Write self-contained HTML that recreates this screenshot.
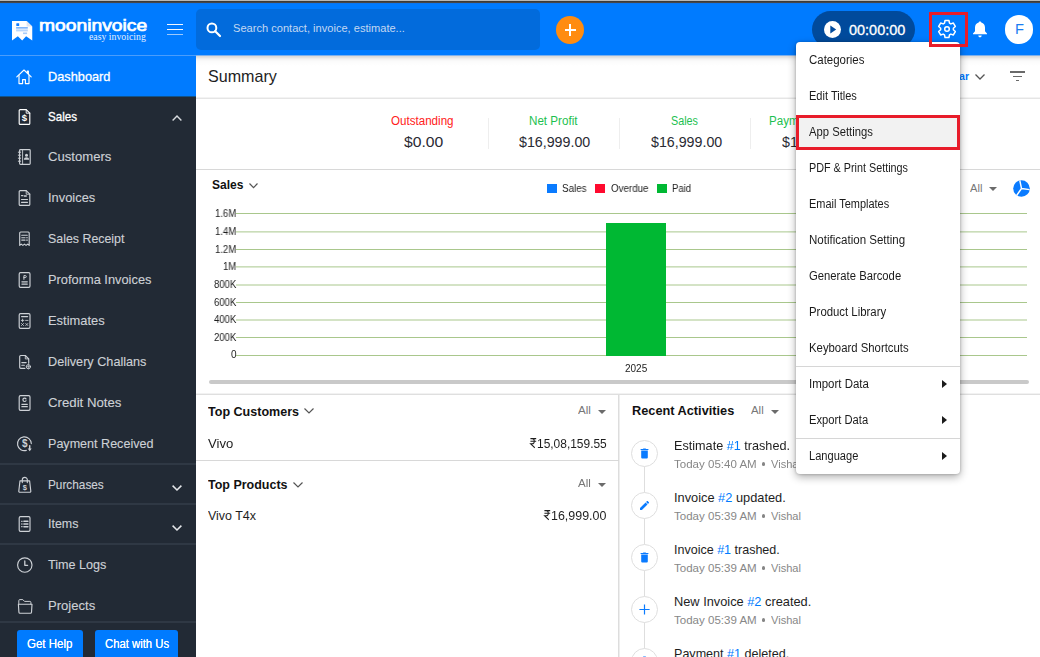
<!DOCTYPE html>
<html>
<head>
<meta charset="utf-8">
<title>Moon Invoice - Dashboard</title>
<style>
*{box-sizing:border-box;margin:0;padding:0}
html,body{width:1040px;height:657px;overflow:hidden;background:#fff}
body{position:relative;font-family:"Liberation Sans",sans-serif;color:#222;font-size:13px}
.a{position:absolute}
.t{position:absolute;white-space:pre;transform-origin:0 50%}
.t b{font-weight:inherit;color:#007bff}
svg{position:absolute;overflow:visible}
.sdiv{position:absolute;left:0;width:196px;height:2px;background:#2f3844}
.hl{position:absolute;height:1px;background:#d8d8d8}
.grid{position:absolute;left:236px;width:791px;height:1px;background:#b7d09e}
.caret{position:absolute;width:0;height:0;border-left:4px solid transparent;border-right:4px solid transparent;border-top:4.5px solid #6b6b6b}
.circ{position:absolute;left:631px;width:27px;height:27px;border:1px solid #dedede;border-radius:50%;background:#fff}
.marr{position:absolute;left:942px;width:0;height:0;border-top:4px solid transparent;border-bottom:4px solid transparent;border-left:5px solid #1b1b1b}
.red{position:absolute;border:3px solid #e81c2a}
</style>
</head>
<body>
<div class="a" style="left:0;top:0;width:1040px;height:56px;background:#007bff"></div>
<div class="a" style="left:0;top:0;width:1040px;height:1px;background:#b9b9b7"></div>
<div class="a" style="left:0;top:1px;width:1040px;height:1px;background:#3a3a3a"></div>
<div class="a" style="left:0;top:2px;width:1040px;height:1px;background:#464749"></div>
<div class="a" style="left:0;top:3px;width:1040px;height:1px;background:#0a76f0"></div>
<div class="a" style="left:0;top:56px;width:196px;height:601px;background:#222a35"></div>
<div class="a" style="left:0;top:55px;width:196px;height:41px;background:#007bff;border-top:1px solid #4a9dfc;border-bottom:0;box-shadow:0 1px 0 #11538a"></div>
<div class="a" style="left:196px;top:55px;width:844px;height:1px;background:#7db0ec"></div>
<div class="a" style="left:196px;top:56px;width:844px;height:10px;background:linear-gradient(#dcdad8 0,#dddcdb 0.5px,#e3e3e3 1.5px,#ededed 2.5px,#f4f4f4 3.5px,#f8f8f8 4.5px,#fbfbfb 5.5px,#fdfdfd 7.5px,#fff 10px)"></div>
<svg style="left:11.85px;top:20.6px" width="20.25" height="19.5" viewBox="0 0 20.25 19.5"><path d="M0 0H14.600L20.250 5.400V19.500L14.100 15.300L10.200 19.500L5.850 15.300L0 19.500Z" fill="#fff"/><path d="M14.600 0V5.400H20.250Z" fill="#e4e6ee"/><rect x="4.300" y="2.200" width="2.900" height="2.700" rx="0.500" fill="#0f7bff"/><rect x="4.100" y="6.400" width="11.700" height="1" fill="#2d86f7"/><rect x="4.100" y="8.400" width="11.700" height="2" fill="#b9d6fb"/><rect x="11" y="11.500" width="4.100" height="1.600" fill="#a8ccfa"/></svg>
<div class="t" style="left:39.20px;top:18.46px;font-size:16px;line-height:16px;color:#fff;transform:scaleX(1.2034);-webkit-text-stroke:0.7px #fff;">mooninvoice</div>
<div class="t" style="left:89.23px;top:32.11px;font-size:10.5px;line-height:10.5px;color:#e4efff;font-family:'Liberation Serif';transform:scaleX(0.9325);">easy invoicing</div>
<div class="a" style="left:167.1px;top:24px;width:16.4px;height:1.25px;background:#f2f7ff"></div>
<div class="a" style="left:167.1px;top:28.5px;width:16.4px;height:1.25px;background:#f2f7ff"></div>
<div class="a" style="left:167.1px;top:33.5px;width:16.4px;height:1.25px;background:#9cc8fb"></div>
<div class="a" style="left:196px;top:9px;width:344px;height:41px;background:#026bdc;border-radius:5px"></div>
<svg style="left:206px;top:22px" width="16" height="16" viewBox="0 0 16 16"><circle cx="5.9" cy="5.9" r="4.4" fill="none" stroke="#fff" stroke-width="2"/><path d="M9.2 9.2L14 14" stroke="#fff" stroke-width="2.2" stroke-linecap="round"/></svg>
<div class="t" style="left:232.50px;top:23.19px;font-size:11px;line-height:11px;color:#c3d8f2;transform:scaleX(1.0075);">Search contact, invoice, estimate...</div>
<div class="a" style="left:556px;top:16px;width:28px;height:28px;border-radius:50%;background:#ff8c10"></div>
<div class="a" style="left:564.5px;top:29px;width:11.5px;height:2px;background:#fff"></div>
<div class="a" style="left:569.2px;top:24.2px;width:2px;height:11.5px;background:#fff"></div>
<div class="a" style="left:812px;top:11px;width:103px;height:37px;border-radius:19px;background:#004a9c"></div>
<svg style="left:823.6px;top:21px" width="17" height="17" viewBox="0 0 17 17"><circle cx="8.5" cy="8.5" r="8.5" fill="#fff"/><path d="M6.3 4.6L12.2 8.5L6.3 12.4Z" fill="#004a9c"/></svg>
<div class="t" style="left:849.17px;top:22.65px;font-size:14px;line-height:14px;color:#fff;transform:scaleX(1.0334);-webkit-text-stroke:0.3px #fff;">00:00:00</div>
<svg style="left:937.4px;top:18.9px" width="20" height="20" viewBox="0 0 20 20" fill="none" stroke="#fff" stroke-width="1.5" stroke-linejoin="round"><circle cx="10" cy="10" r="2.3"/><path d="M12.50 4.11L11.96 1.52L8.04 1.52L7.50 4.11L6.15 4.89L3.64 4.07L1.68 7.46L3.65 9.22L3.65 10.78L1.68 12.54L3.64 15.93L6.15 15.11L7.50 15.89L8.04 18.48L11.96 18.48L12.50 15.89L13.85 15.11L16.36 15.93L18.32 12.54L16.35 10.78L16.35 9.22L18.32 7.46L16.36 4.07L13.85 4.89Z"/></svg>
<svg style="left:972px;top:20.5px" width="16" height="17" viewBox="0 0 16 17"><path d="M8 0.4c.8 0 1.3.5 1.3 1.2 2.3.6 3.7 2.6 3.7 5v3.6l2 2.2v.9H1v-.9l2-2.2V6.6c0-2.4 1.400-4.400 3.700-5 0-.7.500-1.200 1.300-1.200z" fill="#fff"/><path d="M6.300 14.500h3.400c0 1-.75 1.800-1.700 1.800s-1.700-.8-1.700-1.800z" fill="#fff"/></svg>
<div class="a" style="left:1004.7px;top:15.3px;width:28.4px;height:28.4px;border-radius:50%;background:#fff"></div>
<div class="t" style="left:1014.53px;top:21.20px;font-size:15px;line-height:15px;color:#1a7df2;transform:scaleX(0.9813);">F</div>
<div class="t" style="left:48.02px;top:70.20px;font-size:13px;line-height:13px;color:#fff;transform:scaleX(0.9816);-webkit-text-stroke:0.3px #fff;">Dashboard</div>
<div class="t" style="left:48.02px;top:110.00px;font-size:13px;line-height:13px;color:#fff;transform:scaleX(0.8896);-webkit-text-stroke:0.3px #fff;">Sales</div>
<div class="t" style="left:48.02px;top:150.20px;font-size:13px;line-height:13px;color:#cdd1d6;transform:scaleX(1.0092);-webkit-text-stroke:0.12px #cdd1d6;">Customers</div>
<div class="t" style="left:48.02px;top:191.20px;font-size:13px;line-height:13px;color:#cdd1d6;transform:scaleX(0.9903);-webkit-text-stroke:0.12px #cdd1d6;">Invoices</div>
<div class="t" style="left:48.02px;top:232.00px;font-size:13px;line-height:13px;color:#cdd1d6;transform:scaleX(0.9529);-webkit-text-stroke:0.12px #cdd1d6;">Sales Receipt</div>
<div class="t" style="left:48.02px;top:273.00px;font-size:13px;line-height:13px;color:#cdd1d6;transform:scaleX(0.9873);-webkit-text-stroke:0.12px #cdd1d6;">Proforma Invoices</div>
<div class="t" style="left:48.02px;top:313.80px;font-size:13px;line-height:13px;color:#cdd1d6;transform:scaleX(0.9923);-webkit-text-stroke:0.12px #cdd1d6;">Estimates</div>
<div class="t" style="left:48.02px;top:355.00px;font-size:13px;line-height:13px;color:#cdd1d6;transform:scaleX(0.9731);-webkit-text-stroke:0.12px #cdd1d6;">Delivery Challans</div>
<div class="t" style="left:48.02px;top:396.00px;font-size:13px;line-height:13px;color:#cdd1d6;transform:scaleX(1.0165);-webkit-text-stroke:0.12px #cdd1d6;">Credit Notes</div>
<div class="t" style="left:48.02px;top:436.80px;font-size:13px;line-height:13px;color:#cdd1d6;transform:scaleX(0.9662);-webkit-text-stroke:0.12px #cdd1d6;">Payment Received</div>
<div class="t" style="left:48.02px;top:477.50px;font-size:13px;line-height:13px;color:#cdd1d6;transform:scaleX(0.9075);-webkit-text-stroke:0.12px #cdd1d6;">Purchases</div>
<div class="t" style="left:48.02px;top:517.40px;font-size:13px;line-height:13px;color:#cdd1d6;transform:scaleX(0.9573);-webkit-text-stroke:0.12px #cdd1d6;">Items</div>
<div class="t" style="left:48.02px;top:558.20px;font-size:13px;line-height:13px;color:#cdd1d6;transform:scaleX(0.9705);-webkit-text-stroke:0.12px #cdd1d6;">Time Logs</div>
<div class="t" style="left:48.02px;top:599.30px;font-size:13px;line-height:13px;color:#cdd1d6;transform:scaleX(1.0058);-webkit-text-stroke:0.12px #cdd1d6;">Projects</div>
<div class="sdiv" style="top:463px"></div>
<div class="sdiv" style="top:503px"></div>
<div class="sdiv" style="top:543px"></div>
<div class="sdiv" style="top:620.5px"></div>
<svg style="left:16.4px;top:67.6px" width="16" height="18" viewBox="0 0 16 18" fill="none" stroke="#fff" stroke-width="1.15" stroke-linecap="round" stroke-linejoin="round"><path d="M0.800 8.800L8 2L15.200 8.800"/><path d="M3 7.200V15.600H6.600V11.600H9.400V15.600H13V7.200"/><path d="M11.300 4.800V3H12.400V6"/></svg>
<svg style="left:16.7px;top:108.0px" width="16" height="18" viewBox="0 0 16 18" fill="none" stroke="#fff" stroke-width="1.15" stroke-linecap="round" stroke-linejoin="round"><path d="M3.2 1.6h6l3.6 3.6v10.200a1 1 0 0 1-1 1H3.200a1 1 0 0 1-1-1V2.600a1 1 0 0 1 1-1z"/><path d="M9.200 1.600v3.600h3.600" stroke-width="0.900"/><text x="7.5" y="12.8" font-family="Liberation Sans" font-weight="700" font-size="9.5" text-anchor="middle" fill="#fff" stroke="none">$</text></svg>
<svg style="left:16.7px;top:148.2px" width="16" height="18" viewBox="0 0 16 18" fill="none" stroke="#cdd1d6" stroke-width="1.15" stroke-linecap="round" stroke-linejoin="round"><rect x="2.600" y="1.600" width="10.600" height="14.800" rx="0.900"/><path d="M5.600 1.600v14.800" stroke-width="0.900"/><path d="M1.300 4.200h2.400M1.300 7.200h2.400M1.300 10.200h2.400M1.300 13.200h2.400" stroke-width="1"/><circle cx="9.500" cy="7.300" r="1.500" fill="#cdd1d6" stroke="none"/><path d="M6.900 11.800c0-1.800 1.200-2.500 2.600-2.500s2.600.7 2.600 2.500z" fill="#cdd1d6" stroke="none"/></svg>
<svg style="left:16.7px;top:189.2px" width="16" height="18" viewBox="0 0 16 18" fill="none" stroke="#cdd1d6" stroke-width="1.15" stroke-linecap="round" stroke-linejoin="round"><path d="M3.2 1.6h6l3.6 3.6v10.200a1 1 0 0 1-1 1H3.200a1 1 0 0 1-1-1V2.600a1 1 0 0 1 1-1z"/><path d="M9.200 1.600v3.600h3.600" stroke-width="0.900"/><path d="M4.500 6.600h1.300M7.300 7h2" stroke-width="1.300"/><path d="M4.500 10.500h6M4.500 13.300h6" stroke-width="1.200"/></svg>
<svg style="left:16.7px;top:230.0px" width="16" height="18" viewBox="0 0 16 18" fill="none" stroke="#cdd1d6" stroke-width="1.15" stroke-linecap="round" stroke-linejoin="round"><path d="M2.700 3a1 1 0 0 1 1-1h7.500a1 1 0 0 1 1 1v12.400l-1.580-1.300-1.580 1.300-1.580-1.300-1.580 1.300-1.580-1.300-1.580 1.300z"/><path d="M4.700 5.300h5.600M4.700 7.700h3.400M4.700 10.100h3.400M9.600 7.700h.8M9.600 10.100h.8" stroke-width="1.100"/></svg>
<svg style="left:16.7px;top:271.0px" width="16" height="18" viewBox="0 0 16 18" fill="none" stroke="#cdd1d6" stroke-width="1.15" stroke-linecap="round" stroke-linejoin="round"><rect x="2.200" y="1.600" width="10.800" height="14.800" rx="1.300"/><path d="M4.900 10.800h5.400M4.900 13.100h5.400" stroke-width="1.200"/><path d="M6.900 8.400V4.600h1.400a1 1 0 0 1 0 2H6.900" stroke-width="1"/></svg>
<svg style="left:16.7px;top:311.8px" width="16" height="18" viewBox="0 0 16 18" fill="none" stroke="#cdd1d6" stroke-width="1.15" stroke-linecap="round" stroke-linejoin="round"><rect x="2.200" y="1.600" width="10.800" height="14.800" rx="1.300"/><path d="M4.600 4.600h6" stroke-width="1.300"/><path d="M4.300 8.400h2.600M5.600 7.100v2.600M8.600 8.400h2.400M4.500 11.500l2 2M6.500 11.500l-2 2M8.800 11.500l2 2M10.800 11.500l-2 2" stroke-width="0.850"/></svg>
<svg style="left:16.7px;top:353.0px" width="16" height="18" viewBox="0 0 16 18" fill="none" stroke="#cdd1d6" stroke-width="1.15" stroke-linecap="round" stroke-linejoin="round"><path d="M8 15.300H3.700a1 1 0 0 1-1-1V3.500a1 1 0 0 1 1-1h4.600l3.400 3.400v4.400"/><path d="M8.300 2.500v3.400h3.400" stroke-width="0.900"/><path d="M4.800 9.600h4.400M4.800 12.300h2.600" stroke-width="1.100"/><circle cx="11.400" cy="13.700" r="2.100" stroke-width="0.900"/><path d="M11.400 11.600v4.200M9.300 13.700h4.200" stroke-width="0.700"/></svg>
<svg style="left:16.7px;top:394.0px" width="16" height="18" viewBox="0 0 16 18" fill="none" stroke="#cdd1d6" stroke-width="1.15" stroke-linecap="round" stroke-linejoin="round"><rect x="2.200" y="1.600" width="10.800" height="14.800" rx="1.300"/><path d="M4.900 10.300h5.400M4.900 12.700h5.400" stroke-width="1.300"/><path d="M9 4.900c-.3-.5-.8-.8-1.400-.8a1.700 1.700 0 0 0 0 3.400c.6 0 1.100-.3 1.400-.8" stroke-width="1.200"/></svg>
<svg style="left:16.7px;top:434.8px" width="16" height="18" viewBox="0 0 16 18" fill="none" stroke="#cdd1d6" stroke-width="1.15" stroke-linecap="round" stroke-linejoin="round"><path d="M9.300 15.400A6.900 6.900 0 1 1 14.300 8.600"/><text x="7.7" y="12.3" font-family="Liberation Sans" font-weight="700" font-size="10" text-anchor="middle" fill="#cdd1d6" stroke="none">$</text><path d="M12.700 10.800v3.600" stroke-width="1.500"/><path d="M10.700 13.600h4l-2 2.600z" fill="#cdd1d6" stroke="none"/></svg>
<svg style="left:16.7px;top:475.5px" width="16" height="18" viewBox="0 0 16 18" fill="none" stroke="#cdd1d6" stroke-width="1.15" stroke-linecap="round" stroke-linejoin="round"><path d="M3 4.800h9.600l1.200 10.200a1 1 0 0 1-1 1.200H2.800a1 1 0 0 1-1-1.200z"/><path d="M5.300 6.600V3.800a2.500 2.500 0 0 1 5 0v2.800"/><text x="7.8" y="13.7" font-family="Liberation Sans" font-weight="700" font-size="7.5" text-anchor="middle" fill="#cdd1d6" stroke="none">$</text></svg>
<svg style="left:16.7px;top:515.4px" width="16" height="18" viewBox="0 0 16 18" fill="none" stroke="#cdd1d6" stroke-width="1.15" stroke-linecap="round" stroke-linejoin="round"><rect x="2.200" y="1.600" width="10.800" height="14.800" rx="1.300"/><path d="M4.400 6.300h.9M4.400 9h.9M4.400 11.700h.9" stroke-width="1"/><path d="M6.900 6.300h4M6.900 9h4M6.900 11.700h4" stroke-width="1.500"/></svg>
<svg style="left:16.7px;top:556.2px" width="16" height="18" viewBox="0 0 16 18" fill="none" stroke="#cdd1d6" stroke-width="1.15" stroke-linecap="round" stroke-linejoin="round"><circle cx="7.800" cy="9" r="7.200"/><path d="M7.800 5v4.300h2.800" stroke-width="1.300"/></svg>
<svg style="left:16.7px;top:597.3px" width="16" height="18" viewBox="0 0 16 18" fill="none" stroke="#cdd1d6" stroke-width="1.15" stroke-linecap="round" stroke-linejoin="round"><path d="M1.800 7.200V3.600a1 1 0 0 1 1-1h3l1.700 1.800h5.400a1 1 0 0 1 1 1v1.800" stroke-width="1"/><path d="M1.400 7.200h13.600l-.5 8a1.100 1.100 0 0 1-1.100 1H3a1.100 1.100 0 0 1-1.100-1z"/></svg>
<svg style="left:171.5px;top:114.500px" width="10" height="6" viewBox="0 0 10 6" fill="none" stroke="#d8dbdf" stroke-width="1.400"><path d="M0.600 5.400L5 1L9.400 5.400"/></svg>
<svg style="left:171.500px;top:485px" width="10" height="6" viewBox="0 0 10 6" fill="none" stroke="#e4e6e9" stroke-width="1.500"><path d="M0.600 0.600L5 5L9.400 0.600"/></svg>
<svg style="left:171.500px;top:525px" width="10" height="6" viewBox="0 0 10 6" fill="none" stroke="#e4e6e9" stroke-width="1.500"><path d="M0.600 0.600L5 5L9.400 0.600"/></svg>
<div class="a" style="left:17px;top:630px;width:66px;height:30px;background:#007bff;border-radius:3px"></div>
<div class="a" style="left:95px;top:630px;width:82.800px;height:30px;background:#007bff;border-radius:3px"></div>
<div class="t" style="left:26.96px;top:638.14px;font-size:12px;line-height:12px;color:#fff;transform:scaleX(0.9599);text-shadow:0 0 0.500px #fff;">Get Help</div>
<div class="t" style="left:104.86px;top:638.14px;font-size:12px;line-height:12px;color:#fff;transform:scaleX(0.9416);text-shadow:0 0 0.500px #fff;">Chat with Us</div>
<div class="t" style="left:207.74px;top:67.61px;font-size:17px;line-height:17px;color:#1e1e1e;transform:scaleX(0.9467);">Summary</div>
<div class="t" style="left:959.00px;top:70.69px;font-size:11px;line-height:11px;color:#007bff;font-weight:700;transform:scaleX(0.9686);">ar</div>
<svg style="left:974.500px;top:73.500px" width="10" height="6" viewBox="0 0 10 6" fill="none" stroke="#555" stroke-width="1.300"><path d="M0.500 0.500L5 5L9.500 0.500"/></svg>
<div class="a" style="left:1009.500px;top:71.2px;width:15px;height:1.400px;background:#6a6a6a"></div>
<div class="a" style="left:1012.500px;top:75.700px;width:9px;height:1.400px;background:#6a6a6a"></div>
<div class="a" style="left:1015.500px;top:80px;width:3.300px;height:1.400px;background:#6a6a6a"></div>
<div class="hl" style="left:196px;top:98px;width:844px;background:#e5e5e5;box-shadow:0 -1px 0 #f3f3f3"></div>
<div class="hl" style="left:196px;top:169px;width:844px"></div>
<div class="a" style="left:488px;top:117.5px;width:1px;height:31px;background:#eeeeee"></div>
<div class="a" style="left:619px;top:117.5px;width:1px;height:31px;background:#eeeeee"></div>
<div class="a" style="left:750px;top:117.5px;width:1px;height:31px;background:#eeeeee"></div>
<div class="t" style="left:390.66px;top:114.84px;font-size:12px;line-height:12px;color:#ff2020;transform:scaleX(0.9666);">Outstanding</div>
<div class="t" style="left:404.30px;top:133.68px;font-size:15.5px;line-height:15.5px;color:#2a2a33;transform:scaleX(1.0114);">$0.00</div>
<div class="t" style="left:528.96px;top:114.84px;font-size:12px;line-height:12px;color:#1cbf50;transform:scaleX(0.9689);">Net Profit</div>
<div class="t" style="left:519.30px;top:133.68px;font-size:15.5px;line-height:15.5px;color:#2a2a33;transform:scaleX(0.9183);">$16,999.00</div>
<div class="t" style="left:670.96px;top:114.84px;font-size:12px;line-height:12px;color:#1cbf50;transform:scaleX(0.8977);">Sales</div>
<div class="t" style="left:650.80px;top:133.68px;font-size:15.5px;line-height:15.5px;color:#2a2a33;transform:scaleX(0.9183);">$16,999.00</div>
<div class="t" style="left:769.46px;top:114.84px;font-size:12px;line-height:12px;color:#1cbf50;transform:scaleX(0.9627);">Payment Received</div>
<div class="t" style="left:782.30px;top:133.68px;font-size:15.5px;line-height:15.5px;color:#2a2a33;transform:scaleX(0.9183);">$16,999.00</div>
<div class="t" style="left:211.91px;top:177.80px;font-size:13px;line-height:13px;color:#111;font-weight:700;transform:scaleX(0.9281);">Sales</div>
<svg style="left:248.800px;top:182.500px" width="9" height="6" viewBox="0 0 9 6" fill="none" stroke="#555" stroke-width="1.200"><path d="M0.500 0.500L4.500 4.700L8.500 0.500"/></svg>
<div class="a" style="left:547px;top:184px;width:10px;height:9px;background:#0a7bff"></div>
<div class="t" style="left:562.00px;top:183.53px;font-size:10px;line-height:10px;color:#222;transform:scaleX(0.9794);will-change:transform;">Sales</div>
<div class="a" style="left:595px;top:184px;width:10px;height:9px;background:#ff0a2f"></div>
<div class="t" style="left:610.50px;top:183.53px;font-size:10px;line-height:10px;color:#222;transform:scaleX(0.9776);will-change:transform;">Overdue</div>
<div class="a" style="left:656.500px;top:184px;width:10px;height:9px;background:#00b833"></div>
<div class="t" style="left:672.00px;top:183.53px;font-size:10px;line-height:10px;color:#222;transform:scaleX(0.9493);will-change:transform;">Paid</div>
<div class="t" style="left:969.50px;top:182.69px;font-size:11px;line-height:11px;color:#777;transform:scaleX(1.0119);">All</div>
<div class="caret" style="left:989px;top:187px"></div>
<svg style="left:1013px;top:179.500px" width="17" height="17" viewBox="0 0 17 17"><circle cx="8.500" cy="8.500" r="8.300" fill="#0a7bff"/><path d="M8.500 8.500L6.800 0.500M8.500 8.500L16.500 9.600M8.500 8.500L3.600 15.500" stroke="#fff" stroke-width="1.400" fill="none"/></svg>
<div class="t" style="left:215.27px;top:208.53px;font-size:10px;line-height:10px;color:#1c1c1c;transform:scaleX(0.9550);will-change:transform;">1.6M</div>
<div class="t" style="left:215.27px;top:226.53px;font-size:10px;line-height:10px;color:#1c1c1c;transform:scaleX(0.9550);will-change:transform;">1.4M</div>
<div class="t" style="left:215.27px;top:244.53px;font-size:10px;line-height:10px;color:#1c1c1c;transform:scaleX(0.9550);will-change:transform;">1.2M</div>
<div class="t" style="left:223.22px;top:261.54px;font-size:10px;line-height:10px;color:#1c1c1c;transform:scaleX(0.9550);will-change:transform;">1M</div>
<div class="t" style="left:214.19px;top:279.54px;font-size:10px;line-height:10px;color:#1c1c1c;transform:scaleX(0.9550);will-change:transform;">800K</div>
<div class="t" style="left:214.19px;top:297.54px;font-size:10px;line-height:10px;color:#1c1c1c;transform:scaleX(0.9550);will-change:transform;">600K</div>
<div class="t" style="left:214.19px;top:314.54px;font-size:10px;line-height:10px;color:#1c1c1c;transform:scaleX(0.9550);will-change:transform;">400K</div>
<div class="t" style="left:214.19px;top:332.54px;font-size:10px;line-height:10px;color:#1c1c1c;transform:scaleX(0.9550);will-change:transform;">200K</div>
<div class="t" style="left:231.19px;top:349.54px;font-size:10px;line-height:10px;color:#1c1c1c;transform:scaleX(0.9550);will-change:transform;">0</div>
<svg style="left:236px;top:0" width="791" height="400" viewBox="0 0 791 400"><path d="M0 213.50H791" stroke="#a9c78c" stroke-width="1"/><path d="M0 231.90H791" stroke="#a9c78c" stroke-width="1"/><path d="M0 249.50H791" stroke="#a9c78c" stroke-width="1"/><path d="M0 266.90H791" stroke="#a9c78c" stroke-width="1"/><path d="M0 285.00H791" stroke="#a9c78c" stroke-width="1"/><path d="M0 302.50H791" stroke="#a9c78c" stroke-width="1"/><path d="M0 320.00H791" stroke="#a9c78c" stroke-width="1"/><path d="M0 337.50H791" stroke="#a9c78c" stroke-width="1"/><path d="M0 355.50H791" stroke="#a9c78c" stroke-width="1"/></svg>
<div class="a" style="left:605.700px;top:223px;width:60px;height:132.500px;background:#00b833"></div>
<div class="t" style="left:624.50px;top:363.54px;font-size:10px;line-height:10px;color:#222;will-change:transform;">2025</div>
<div class="a" style="left:208.500px;top:380.200px;width:820px;height:3.700px;border-radius:2px;background:#c9c9c9"></div>
<div class="hl" style="left:196px;top:394px;width:844px;background:#dfdfdf;box-shadow:0 -1px 0 #f2f2f2"></div>
<div class="a" style="left:618px;top:395px;width:1px;height:262px;background:#dddddd;box-shadow:1px 0 0 #eeeeee"></div>
<div class="hl" style="left:196px;top:460px;width:423px"></div>
<div class="t" style="left:207.91px;top:404.50px;font-size:13px;line-height:13px;color:#111;font-weight:700;transform:scaleX(0.9645);">Top Customers</div>
<svg style="left:304px;top:408px" width="10" height="6" viewBox="0 0 10 6" fill="none" stroke="#555" stroke-width="1.200"><path d="M0.500 0.500L5 5L9.500 0.500"/></svg>
<div class="t" style="left:578.21px;top:404.99px;font-size:11px;line-height:11px;color:#777;transform:scaleX(1.0528);">All</div>
<div class="caret" style="left:598.300px;top:409.500px"></div>
<div class="t" style="left:207.91px;top:436.50px;font-size:13px;line-height:13px;color:#1e1e1e;transform:scaleX(1.0071);">Vivo</div>
<svg style="left:530px;top:438.3px" width="6.600" height="10" viewBox="0 0 8 10" preserveAspectRatio="none" fill="none" stroke="#1e1e1e" stroke-width="1.100"><path d="M0.500 0.600H7.500M0.500 3.300H7.500M0.500 0.600H2.800C6 0.600 6 5.800 2.800 5.800H0.700L5.800 9.800"/></svg>
<div class="t" style="left:536.71px;top:437.00px;font-size:13px;line-height:13px;color:#1e1e1e;transform:scaleX(0.9188);">15,08,159.55</div>
<div class="t" style="left:207.91px;top:477.50px;font-size:13px;line-height:13px;color:#111;font-weight:700;transform:scaleX(0.9605);">Top Products</div>
<svg style="left:292.5px;top:481.5px" width="10" height="6" viewBox="0 0 10 6" fill="none" stroke="#555" stroke-width="1.200"><path d="M0.500 0.500L5 5L9.500 0.500"/></svg>
<div class="t" style="left:578.21px;top:478.49px;font-size:11px;line-height:11px;color:#777;transform:scaleX(1.0528);">All</div>
<div class="caret" style="left:598.300px;top:483px"></div>
<div class="t" style="left:207.91px;top:509.00px;font-size:13px;line-height:13px;color:#1e1e1e;transform:scaleX(0.9587);">Vivo T4x</div>
<svg style="left:544.3px;top:510.3px" width="6.600" height="10" viewBox="0 0 8 10" preserveAspectRatio="none" fill="none" stroke="#1e1e1e" stroke-width="1.100"><path d="M0.500 0.600H7.500M0.500 3.300H7.500M0.500 0.600H2.800C6 0.600 6 5.800 2.800 5.800H0.700L5.800 9.800"/></svg>
<div class="t" style="left:551.01px;top:509.00px;font-size:13px;line-height:13px;color:#1e1e1e;transform:scaleX(0.9584);">16,999.00</div>
<div class="t" style="left:631.91px;top:404.20px;font-size:13px;line-height:13px;color:#111;font-weight:700;transform:scaleX(0.9804);">Recent Activities</div>
<div class="t" style="left:750.71px;top:404.99px;font-size:11px;line-height:11px;color:#777;transform:scaleX(1.0364);">All</div>
<div class="caret" style="left:770.700px;top:409.500px"></div>
<div class="a" style="left:644px;top:453px;width:1px;height:204px;background:#dedede"></div>
<div class="circ" style="top:439.7px"></div>
<svg style="left:638px;top:446.7px" width="13" height="13" viewBox="0 0 13 13"><path d="M3.200 3.600h6.600v6.900a1 1 0 0 1-1 1H4.200a1 1 0 0 1-1-1zM2.600 2.900V2h2.300l.5-.6h2.200l.5.600h2.300v.900z" fill="#0a7bff"/></svg>
<div class="t" style="left:673.71px;top:439.00px;font-size:13px;line-height:13px;color:#1e1e1e;transform:scaleX(0.9724);">Estimate <b>#1</b> trashed.</div>
<div class="t" style="left:674.00px;top:458.99px;font-size:11px;line-height:11px;color:#878787;transform:scaleX(1.0480);">Today 05:40 AM</div>
<div class="a" style="left:761.6px;top:462.3px;width:3.8px;height:3.8px;border-radius:50%;background:#858585"></div>
<div class="t" style="left:770.80px;top:458.99px;font-size:11px;line-height:11px;color:#878787;transform:scaleX(1.0072);">Vishal</div>
<div class="circ" style="top:491.7px"></div>
<svg style="left:638px;top:498.7px" width="13" height="13" viewBox="0 0 13 13"><path d="M2 9.100V11h1.900l5.600-5.600-1.900-1.900zM10.900 4a.5.500 0 0 0 0-.7L9.700 2.100a.5.500 0 0 0-.7 0l-.9.900 1.900 1.900z" fill="#0a7bff"/></svg>
<div class="t" style="left:673.71px;top:491.00px;font-size:13px;line-height:13px;color:#1e1e1e;transform:scaleX(0.9846);">Invoice <b>#2</b> updated.</div>
<div class="t" style="left:674.00px;top:510.99px;font-size:11px;line-height:11px;color:#878787;transform:scaleX(1.0480);">Today 05:39 AM</div>
<div class="a" style="left:761.6px;top:514.3px;width:3.8px;height:3.8px;border-radius:50%;background:#858585"></div>
<div class="t" style="left:770.80px;top:510.99px;font-size:11px;line-height:11px;color:#878787;transform:scaleX(1.0072);">Vishal</div>
<div class="circ" style="top:543.7px"></div>
<svg style="left:638px;top:550.7px" width="13" height="13" viewBox="0 0 13 13"><path d="M3.200 3.600h6.600v6.900a1 1 0 0 1-1 1H4.200a1 1 0 0 1-1-1zM2.600 2.900V2h2.300l.5-.6h2.200l.5.600h2.300v.900z" fill="#0a7bff"/></svg>
<div class="t" style="left:673.71px;top:543.00px;font-size:13px;line-height:13px;color:#1e1e1e;transform:scaleX(0.9625);">Invoice <b>#1</b> trashed.</div>
<div class="t" style="left:674.00px;top:562.99px;font-size:11px;line-height:11px;color:#878787;transform:scaleX(1.0480);">Today 05:39 AM</div>
<div class="a" style="left:761.6px;top:566.3px;width:3.8px;height:3.8px;border-radius:50%;background:#858585"></div>
<div class="t" style="left:770.80px;top:562.99px;font-size:11px;line-height:11px;color:#878787;transform:scaleX(1.0072);">Vishal</div>
<div class="circ" style="top:595.7px"></div>
<svg style="left:638px;top:602.7px" width="13" height="13" viewBox="0 0 13 13"><path d="M6.500 1.400v10.200M1.400 6.500h10.200" stroke="#0a7bff" stroke-width="1.200" fill="none"/></svg>
<div class="t" style="left:673.71px;top:595.00px;font-size:13px;line-height:13px;color:#1e1e1e;transform:scaleX(0.9840);">New Invoice <b>#2</b> created.</div>
<div class="t" style="left:674.00px;top:614.99px;font-size:11px;line-height:11px;color:#878787;transform:scaleX(1.0480);">Today 05:39 AM</div>
<div class="a" style="left:761.6px;top:618.3px;width:3.8px;height:3.8px;border-radius:50%;background:#858585"></div>
<div class="t" style="left:770.80px;top:614.99px;font-size:11px;line-height:11px;color:#878787;transform:scaleX(1.0072);">Vishal</div>
<div class="circ" style="top:647.7px"></div>
<svg style="left:638px;top:654.7px" width="13" height="13" viewBox="0 0 13 13"><path d="M3.200 3.600h6.600v6.900a1 1 0 0 1-1 1H4.200a1 1 0 0 1-1-1zM2.600 2.900V2h2.300l.5-.6h2.200l.5.600h2.300v.900z" fill="#0a7bff"/></svg>
<div class="t" style="left:673.71px;top:647.00px;font-size:13px;line-height:13px;color:#1e1e1e;transform:scaleX(0.9664);">Payment <b>#1</b> deleted.</div>
<div class="t" style="left:674.00px;top:666.99px;font-size:11px;line-height:11px;color:#878787;transform:scaleX(1.0480);">Today 05:39 AM</div>
<div class="a" style="left:761.6px;top:670.3px;width:3.8px;height:3.8px;border-radius:50%;background:#858585"></div>
<div class="t" style="left:770.80px;top:666.99px;font-size:11px;line-height:11px;color:#878787;transform:scaleX(1.0072);">Vishal</div>
<div class="a" style="left:796px;top:42px;width:164px;height:432px;background:#fff;border-radius:4px;box-shadow:0 3px 8px rgba(0,0,0,.32),0 0 3px rgba(0,0,0,.25)"></div>
<div class="a" style="left:796px;top:115px;width:164px;height:35px;background:#f2f2f2"></div>
<div class="t" style="left:808.76px;top:53.54px;font-size:12px;line-height:12px;color:#1b1b1b;transform:scaleX(0.9557);">Categories</div>
<div class="t" style="left:808.76px;top:89.54px;font-size:12px;line-height:12px;color:#1b1b1b;transform:scaleX(0.9198);">Edit Titles</div>
<div class="t" style="left:808.76px;top:125.54px;font-size:12px;line-height:12px;color:#1b1b1b;transform:scaleX(0.9385);">App Settings</div>
<div class="t" style="left:808.76px;top:161.54px;font-size:12px;line-height:12px;color:#1b1b1b;transform:scaleX(0.8993);">PDF &amp; Print Settings</div>
<div class="t" style="left:808.76px;top:197.54px;font-size:12px;line-height:12px;color:#1b1b1b;transform:scaleX(0.9127);">Email Templates</div>
<div class="t" style="left:808.76px;top:233.54px;font-size:12px;line-height:12px;color:#1b1b1b;transform:scaleX(0.9610);">Notification Setting</div>
<div class="t" style="left:808.76px;top:269.54px;font-size:12px;line-height:12px;color:#1b1b1b;transform:scaleX(0.9398);">Generate Barcode</div>
<div class="t" style="left:808.76px;top:305.54px;font-size:12px;line-height:12px;color:#1b1b1b;transform:scaleX(0.9482);">Product Library</div>
<div class="t" style="left:808.76px;top:341.54px;font-size:12px;line-height:12px;color:#1b1b1b;transform:scaleX(0.9455);">Keyboard Shortcuts</div>
<div class="t" style="left:808.76px;top:377.54px;font-size:12px;line-height:12px;color:#1b1b1b;transform:scaleX(0.9547);">Import Data</div>
<div class="t" style="left:808.76px;top:413.54px;font-size:12px;line-height:12px;color:#1b1b1b;transform:scaleX(0.9335);">Export Data</div>
<div class="t" style="left:808.76px;top:449.54px;font-size:12px;line-height:12px;color:#1b1b1b;transform:scaleX(0.9245);">Language</div>
<div class="a" style="left:796px;top:366px;width:164px;height:1px;background:#d6d6d6"></div>
<div class="a" style="left:796px;top:438px;width:164px;height:1px;background:#d6d6d6"></div>
<div class="marr" style="top:380px"></div>
<div class="marr" style="top:416px"></div>
<div class="marr" style="top:452px"></div>
<div class="red" style="left:929px;top:12px;width:39px;height:34.500px"></div>
<div class="red" style="left:796px;top:115px;width:164px;height:35px"></div>
</body>
</html>
